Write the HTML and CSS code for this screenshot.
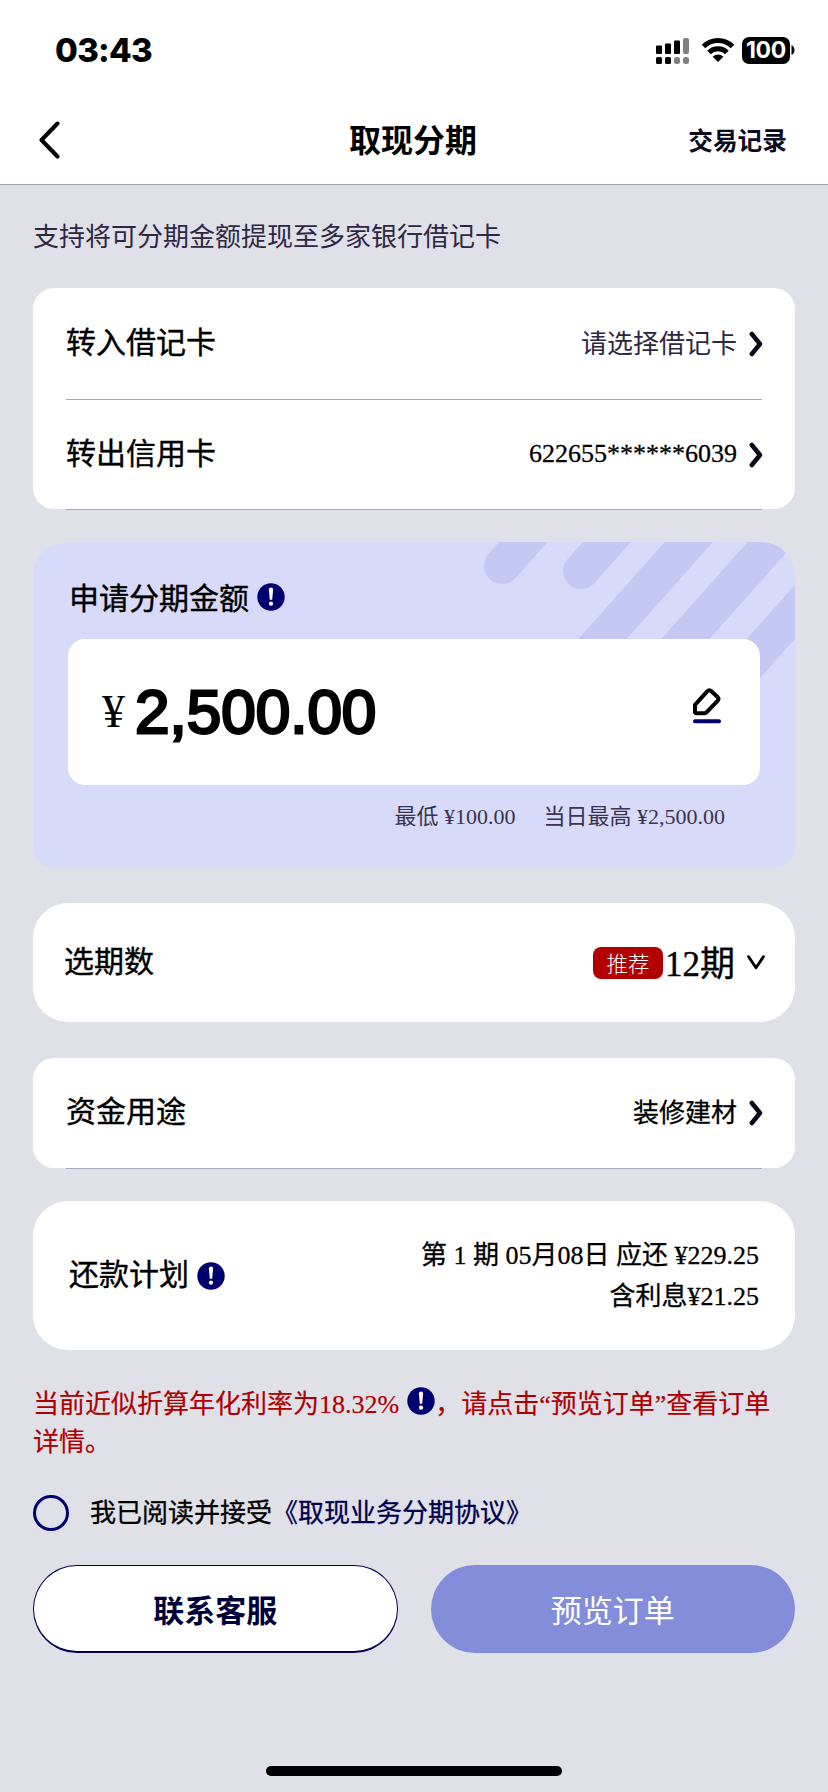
FILE: index.html
```
<!DOCTYPE html>
<html lang="zh-CN">
<head>
<meta charset="utf-8">
<title>取现分期</title>
<link rel="stylesheet" href="styles.css">
</head>
<body>
<svg class="defs" width="0" height="0">
  <symbol id="chevron" viewBox="0 0 14 26"><path d="M2.8 3 L11 13 L2.8 23" fill="none" stroke="#0a0818" stroke-width="4.500" stroke-linecap="round" stroke-linejoin="round"/></symbol>
  <symbol id="info" viewBox="0 0 28 28"><circle cx="14" cy="14" r="13.7" fill="#00006f"/><path d="M11.9 6.6a2.1 2.1 0 0 1 4.2 0l-.9 10.2h-2.4z" fill="#fff"/><circle cx="14" cy="20.7" r="2.1" fill="#fff"/></symbol>
</svg>
<header class="top">
  <div class="status">
    <span class="time">03:43</span>
    <div class="status-icons">
      <svg class="signal" width="34" height="27" viewBox="0 0 34 27">
        <g fill="#000"><rect x="0" y="8.500" width="6" height="8.500" rx="1"/><rect x="9" y="6.500" width="6" height="10.500" rx="1"/><rect x="18" y="3.500" width="6" height="13.500" rx="1"/><rect x="0" y="20" width="6" height="7" rx="1.500"/><rect x="9" y="20" width="6" height="7" rx="1.500"/></g>
        <g fill="#808080"><rect x="27" y="1" width="6" height="16" rx="2"/><rect x="18" y="20" width="6" height="7" rx="2.500"/><rect x="27" y="20" width="6" height="7" rx="2.500"/></g>
      </svg>
      <svg class="wifi" width="34" height="26" viewBox="0 0 34 26"><g fill="none" stroke="#000" stroke-width="5"><path d="M2.500 9.600 A20.500 20.500 0 0 1 31.500 9.600"/><path d="M8 15.400 A12.700 12.700 0 0 1 26 15.400"/></g><path d="M17 25 L11.600 19.700 A8 8 0 0 1 22.400 19.700 Z"/></svg>
      <div class="battery"><span class="battery-body">100</span><svg width="4" height="10" viewBox="0 0 4 10"><path d="M.5 0 Q3.500 1.500 3.500 5 T.5 10Z"/></svg></div>
    </div>
  </div>
  <nav class="nav">
    <svg class="back" width="22" height="38" viewBox="0 0 22 38"><path d="M18.500 2.500 L2.500 19 L18.500 35.500" fill="none" stroke="#000" stroke-width="4" stroke-linecap="round" stroke-linejoin="round"/></svg>
    <h1 class="title">取现分期</h1>
    <a class="records">交易记录</a>
  </nav>
</header>
<main class="page">
  <p class="intro">支持将可分期金额提现至多家银行借记卡</p>

  <section class="card cards-pick">
    <div class="row line"><span class="label">转入借记卡</span><span class="value muted">请选择借记卡</span><svg class="chev" width="14" height="26"><use href="#chevron"/></svg></div>
    <div class="row"><span class="label">转出信用卡</span><span class="value number">622655******6039</span><svg class="chev" width="14" height="26"><use href="#chevron"/></svg></div>
  </section>
  <div class="underline"></div>

  <section class="amount-card">
    <svg class="stripes" width="762" height="326" viewBox="0 0 762 326"><g stroke="#c4c8f3" stroke-width="36" stroke-linecap="round"><path d="M469 24 L505.700 -17"/><path d="M548 29 L589 -17"/><path d="M671 -17 L548 121"/><path d="M754 -17 L631 121"/><path d="M798 29.500 L692 148"/></g></svg>
    <div class="amount-head"><span class="label">申请分期金额</span><svg width="28" height="28"><use href="#info"/></svg></div>
    <div class="amount-box">
      <span class="yen">¥</span><span class="amount">2,500.00</span>
      <svg class="edit" width="28" height="36" viewBox="0 0 28 36"><path d="M2 24.500 V16.800 L14.200 3.300 Q16.300 1.200 18.400 3.300 L24.800 9.200 Q26.200 10.800 24.800 12.600 L13.500 24.300 Q12.500 25.300 11 25.300 H3.800 Q2 25.300 2 23.500Z" fill="none" stroke="#000" stroke-width="4" stroke-linejoin="round"/><path d="M2 33.200H26" stroke="#00006f" stroke-width="4" stroke-linecap="round"/></svg>
    </div>
    <div class="limits"><span>最低 ¥100.00</span><span>当日最高 ¥2,500.00</span></div>
  </section>

  <section class="card round term">
    <span class="label">选期数</span><span class="badge">推荐</span><span class="periods">12期</span>
    <svg class="down" width="20" height="18" viewBox="0 0 20 18"><path d="M2.600 2.800 L10 13.800 L17.400 2.800" fill="none" stroke="#000" stroke-width="2.900" stroke-linecap="round" stroke-linejoin="round"/></svg>
  </section>

  <section class="card usage">
    <div class="row"><span class="label">资金用途</span><span class="value">装修建材</span><svg class="chev" width="14" height="26"><use href="#chevron"/></svg></div>
  </section>
  <div class="underline cool"></div>

  <section class="card round plan">
    <span class="label">还款计划</span><svg class="plan-info" width="28" height="28"><use href="#info"/></svg>
    <div class="plan-text"><div>第 1 期 05月08日 应还 ¥229.25</div><div>含利息¥21.25</div></div>
  </section>

  <p class="notice">当前近似折算年化利率为18.32%<svg class="notice-info" width="28" height="28"><use href="#info"/></svg>，请点击“预览订单”查看订单<br>详情。</p>

  <div class="agree"><span class="radio"></span><span class="agree-text">我已阅读并接受<a class="link">《取现业务分期协议》</a></span></div>

  <div class="actions"><button class="btn outline">联系客服</button><button class="btn filled">预览订单</button></div>
</main>
<div class="home"></div>
</body>
</html>
```
FILE: styles.css
```
* { box-sizing: border-box; }
body {
  margin: 0;
  width: 828px;
  height: 1792px;
  overflow: hidden;
  display: flex;
  flex-direction: column;
  background: #e0e0e9;
  color: #000;
  font-family: "Liberation Serif", "Noto Sans CJK SC", sans-serif;
  font-size: 26px;
}
svg { display: block; flex: none; }
.defs { position: absolute; }
h1, p { margin: 0; }

.top { height: 185px; background: #fff; border-bottom: 1px solid #a3a3aa; flex: none; }
.status { height: 100px; padding: 0 33px 0 55px; display: flex; align-items: center; justify-content: space-between; }
.time { font: 800 33px/40px Inter, sans-serif; letter-spacing: -0.7px; }
.status-icons { display: flex; align-items: center; }
.signal { margin-right: 10.500px; }
.wifi { margin-right: 7.500px; }
.battery { display: flex; align-items: center; gap: 1px; }
.battery-body {
  width: 48px; height: 27px; border-radius: 7px; background: #000; color: #fff;
  font: 700 23px/27px Inter, sans-serif; text-align: center; letter-spacing: -0.3px;
}
.nav { height: 80px; padding: 0 41px 0 39px; display: grid; grid-template-columns: 1fr auto 1fr; align-items: center; }
.title { font: 700 32px/40px "Noto Sans CJK SC", sans-serif; padding-bottom: 4px; }
.records { justify-self: end; padding-bottom: 3px; font: 700 24.700px/36px "Noto Sans CJK SC", sans-serif; color: #0d0a20; }

.page { padding: 0 33px; flex: 1; display: flex; flex-direction: column; }
.intro { margin-top: 33px; height: 70px; line-height: 40px; color: #2e2742; }

.card { background: #fff; border-radius: 21px; }
.round { border-radius: 35px; }
.row { height: 110px; margin: 0 32px 0 33px; display: flex; align-items: center; }
.row.line { height: 112px; border-bottom: 1px solid #a8a8a8; margin-right: 33px; }
.row.line .chev { margin-right: -1px; }
.cards-pick { height: 221px; overflow: hidden; }
.label { font-size: 30px; line-height: 44px; padding-bottom: 2px; -webkit-text-stroke: 0.4px currentColor; }
.value { margin-left: auto; margin-right: 12px; line-height: 40px; padding-top: 2px; -webkit-text-stroke: 0.3px currentColor; }
.value.number { padding: 0 0 2px; }
.value.muted { color: #2e2742; -webkit-text-stroke: 0; }
.underline { height: 1px; margin: 0 33px; background: #a8a8ac; flex: none; }
.underline.cool { background: #a8a9bb; }

.amount-card {
  position: relative; height: 326px; margin-top: 32px; padding: 35px 30px 0 35px;
  border-radius: 34px 34px 22px 22px; background: #d8daf9; overflow: hidden;
}
.stripes { position: absolute; left: 0; top: 0; }
.amount-head { position: relative; height: 62px; padding-left: 1px; display: flex; align-items: flex-start; gap: 8px; }
.amount-head svg { margin-top: 6px; }
.amount-box {
  position: relative; width: 692px; height: 146px; padding: 0 39px 0 34px;
  border-radius: 17px; background: #fff; display: flex; align-items: center;
}
.yen { font-size: 46px; line-height: 60px; }
.amount { margin-left: 10px; font: 400 62px/70px "Liberation Sans", sans-serif; -webkit-text-stroke: 2.800px #000; }
.edit { margin-left: auto; margin-top: -12px; }
.limits { height: 58px; padding-right: 40px; display: flex; justify-content: flex-end; align-items: center; gap: 28px; font-size: 22px; color: #3a3350; }

.term { height: 119px; margin-top: 35px; padding: 0 29px 0 31px; display: flex; align-items: center; }
.badge {
  margin-left: auto; width: 70px; height: 32px; border-radius: 8px; background: #b20000; color: #fff;
  font: 300 21.500px/32px "Noto Sans CJK SC", sans-serif; text-align: center;
}
.periods { font-size: 35px; line-height: 50px; margin-left: 2px; padding-top: 4px; -webkit-text-stroke: 0.4px currentColor; }
.down { margin-left: 11px; }

.usage { margin-top: 36px; height: 110px; }

.plan { height: 149px; margin-top: 32px; padding: 0 36px; display: flex; align-items: center; }
.plan-info { margin-left: 8px; }
.plan-text { margin-left: auto; text-align: right; line-height: 41px; -webkit-text-stroke: 0.3px currentColor; }

.notice { margin-top: 36px; line-height: 38px; color: #ae0000; white-space: nowrap; -webkit-text-stroke: 0.2px currentColor; }
.notice-info { display: inline-block; margin: 0 0 0 8px; vertical-align: -2px; }

.agree { display: flex; align-items: center; height: 36px; margin-top: 33px; }
.radio { width: 36px; height: 36px; border: 3.500px solid #00006f; border-radius: 50%; }
.agree-text { margin-left: 21px; line-height: 36px; padding-top: 1px; -webkit-text-stroke: 0.3px currentColor; }
.link { color: #00004d; }

.actions { display: grid; grid-template-columns: 1fr 1fr; gap: 33px; margin-top: 34px; }
.btn { height: 88px; border-radius: 44px; border: 0; padding: 0; font: 400 31px/44px "Noto Sans CJK SC", sans-serif; }
.outline { background: #fff; border: 1px solid #00004d; border-bottom-width: 2px; color: #000038; font-weight: 700; }
.filled { background: #838dda; color: #fff; }
.home { width: 296px; height: 10px; margin: 0 auto 16px; border-radius: 5px; background: #000; flex: none; }
```
